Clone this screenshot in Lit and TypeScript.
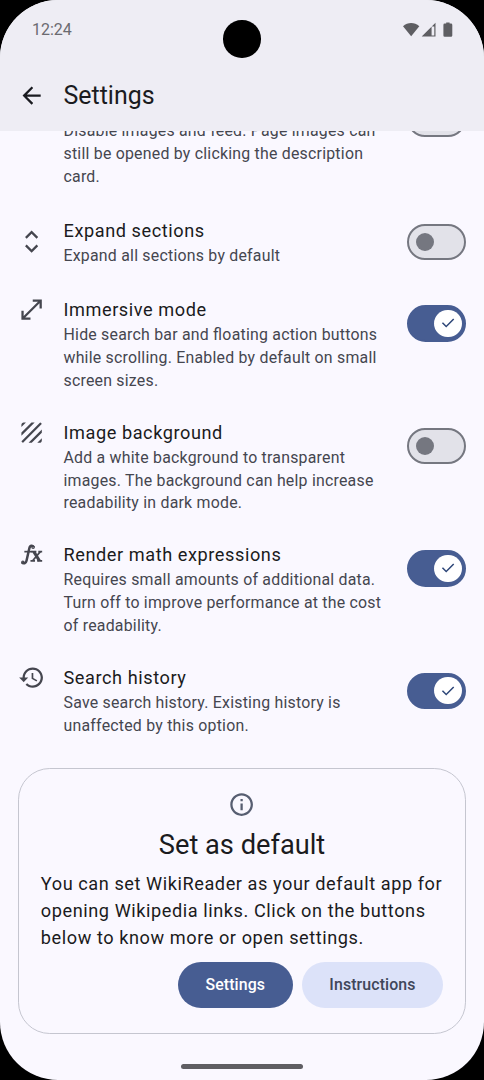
import { LitElement, html, css, svg, nothing } from "lit";
import { customElement, property } from "lit/decorators.js";

const icons: Record<string, { box: string; d: string }> = {
  back: { box: "0 -960 960 960", d: "m313-440 224 224-57 56-320-320 320-320 57 56-224 224h487v80H313Z" },
  unfold: { box: "0 0 24 24", d: "M12 2.2 6.2 8l1.45 1.45L12 5.1l4.35 4.35L17.8 8zM12 21.8l5.8-5.8-1.45-1.45L12 18.9l-4.35-4.35L6.2 16z" },
  expand: { box: "0 -960 960 960", d: "M120-120v-320h80v184l504-504H520v-80h320v320h-80v-184L256-200h184v80H120Z" },
  texture: { box: "0 0 24 24", d: "M19.51 3.08L3.08 19.51c.09.34.27.65.51.9.25.24.56.42.9.51L20.93 4.49c-.19-.69-.73-1.23-1.42-1.41zM11.88 3L3 11.88v2.83L14.71 3h-2.83zM5 3c-1.1 0-2 .9-2 2v2l4-4H5zm14 18c.55 0 1.05-.22 1.41-.59.37-.36.59-.86.59-1.41v-2l-4 4h2zm-9.71 0h2.83L21 12.12V9.29L9.29 21z" },
  history: { box: "0 0 24 24", d: "M13 3c-4.97 0-9 4.03-9 9H1l3.89 3.89.07.14L9 12H6c0-3.87 3.13-7 7-7s7 3.13 7 7-3.13 7-7 7c-1.93 0-3.68-.79-4.94-2.06l-1.42 1.42C8.27 19.99 10.51 21 13 21c4.97 0 9-4.03 9-9s-4.03-9-9-9zm-1 5v5l4.28 2.54.72-1.21-3.5-2.08V8H12z" },
  info: { box: "0 0 24 24", d: "M11 7h2v2h-2zm0 4h2v6h-2zm1-9C6.48 2 2 6.48 2 12s4.48 10 10 10 10-4.48 10-10S17.52 2 12 2zm0 18c-4.41 0-8-3.59-8-8s3.59-8 8-8 8 3.59 8 8-3.59 8-8 8z" },
  check: { box: "0 -960 960 960", d: "M382-240 154-468l57-57 171 171 367-367 57 57-424 424Z" },
};

@customElement("app-icon")
class AppIcon extends LitElement {
  @property() name = "";
  static styles = css`
    :host { display: block; width: calc(24 * var(--dp)); height: calc(24 * var(--dp)); flex: none; }
    svg { display: block; width: 100%; height: 100%; fill: currentColor; }
    .fx { fill: none; stroke: currentColor; stroke-width: 2.2; }
    .thick { stroke-width: 2.7; }
    .thin { stroke-width: 1.5; }
  `;
  render() {
    if (this.name === "function") {
      return html`<svg viewBox="0 0 24 24">
        <g class="fx">
          <path d="M13.9 5.6C13.3 3.6 10.6 3.6 10 6.4L7.5 17.4C7 19.9 4.9 20.4 3.6 18.7" />
          <circle cx="13.3" cy="5.5" r=".5" />
          <circle cx="4.3" cy="18.9" r=".5" />
          <path class="thin" d="M5.6 9.4H12.6" />
          <path class="thick" d="M13.9 9.4L18.9 17.4" />
          <path class="thin" d="M19.7 9.4L12.9 17.4" />
          <path class="thin" d="M11.9 9.4H16.2M17.9 9.4H21.3M11 17.5H15M16.9 17.5H21.3" />
        </g>
      </svg>`;
    }
    const i = icons[this.name];
    return i ? html`<svg viewBox=${i.box}>${svg`<path d=${i.d} />`}</svg>` : nothing;
  }
}

@customElement("app-switch")
class AppSwitch extends LitElement {
  @property({ type: Boolean }) on = false;
  static styles = css`
    :host { display: flex; align-items: center; flex: none; height: calc(48 * var(--dp)); }
    .track {
      box-sizing: border-box; display: flex; align-items: center;
      width: calc(52 * var(--dp)); height: calc(32 * var(--dp));
      border: calc(2 * var(--dp)) solid #757780; border-radius: 99px;
      background: #e2e2e9; padding: 0 calc(6 * var(--dp));
    }
    .thumb {
      display: flex; align-items: center; justify-content: center;
      width: calc(16 * var(--dp)); height: calc(16 * var(--dp));
      border-radius: 50%; background: #757780;
    }
    .on { background: #475d92; border-color: #475d92; justify-content: flex-end; padding: 0 calc(2 * var(--dp)); }
    .on .thumb { width: calc(24 * var(--dp)); height: calc(24 * var(--dp)); background: #fff; color: #2d4678; }
    app-icon { width: calc(16 * var(--dp)); height: calc(16 * var(--dp)); }
  `;
  render() {
    return html`<div class="track ${this.on ? "on" : ""}">
      <div class="thumb">${this.on ? html`<app-icon name="check"></app-icon>` : nothing}</div>
    </div>`;
  }
}

interface Setting { icon: string; title: string; lines: string[]; on: boolean }

const settings: Setting[] = [
  { icon: "", title: "", lines: ["Disable images and feed. Page images can", "still be opened by clicking the description", "card."], on: false },
  { icon: "unfold", title: "Expand sections", lines: ["Expand all sections by default"], on: false },
  { icon: "expand", title: "Immersive mode", lines: ["Hide search bar and floating action buttons", "while scrolling. Enabled by default on small", "screen sizes."], on: true },
  { icon: "texture", title: "Image background", lines: ["Add a white background to transparent", "images. The background can help increase", "readability in dark mode."], on: false },
  { icon: "function", title: "Render math expressions", lines: ["Requires small amounts of additional data.", "Turn off to improve performance at the cost", "of readability."], on: true },
  { icon: "history", title: "Search history", lines: ["Save search history. Existing history is", "unaffected by this option."], on: true },
];

@customElement("app-root")
class AppRoot extends LitElement {
  static styles = css`
    :host {
      --dp: 1.1344px;
      display: block; width: 484px; height: 1080px; overflow: hidden;
      background: #000; font-family: Roboto, sans-serif; color: #1a1b20;
    }
    .screen {
      position: relative; display: flex; flex-direction: column;
      height: 1080px; border-radius: 58px; overflow: hidden; background: #faf8ff;
    }
    .top { flex: none; height: 131.2px; background: #eeedf4; }
    .status {
      display: flex; justify-content: space-between; align-items: center;
      height: 59px; padding: 0 30px 0 32px; box-sizing: border-box;
      font-size: 16px; color: #6b6a70;
    }
    .status svg { display: block; fill: #5e5e62; }
    .camera {
      position: absolute; left: 223px; top: 20px; width: 37.5px; height: 37.5px;
      border-radius: 50%; background: #000;
    }
    .bar {
      display: flex; align-items: center; gap: calc(16 * var(--dp));
      height: 73px; padding-left: calc(16 * var(--dp));
      font-size: calc(22 * var(--dp));
    }
    .list { flex: 1; min-height: 0; overflow: hidden; display: flex; flex-direction: column; }
    .items { flex: none; margin-top: -52.8px; }
    .row {
      display: flex; gap: calc(16 * var(--dp)); align-items: flex-start;
      padding: calc(12 * var(--dp)) calc(16 * var(--dp)); color: #45464f;
    }
    .row.short { align-items: center; height: calc(72 * var(--dp)); padding-block: 0; }
    .text { flex: 1; white-space: nowrap; font-feature-settings: "liga" 1; }
    .title { height: calc(24 * var(--dp)); font-size: calc(16 * var(--dp)); line-height: calc(24 * var(--dp)); letter-spacing: calc(0.5 * var(--dp)); color: #1a1b20; }
    .desc {
      height: calc(20 * var(--dp)); font-size: calc(14 * var(--dp));
      line-height: calc(21.2 * var(--dp)); letter-spacing: 0.225px;
    }
    .card {
      flex: none; box-sizing: border-box; height: 266px;
      margin: 18.3px calc(16 * var(--dp)) 0; padding: 21.7px;
      border: 1px solid #c5c6d0; border-radius: calc(28 * var(--dp));
      display: flex; flex-direction: column; align-items: center;
    }
    .card app-icon { color: #575e71; }
    .card h2 { margin: 9px 0 0; font-weight: 400; font-size: calc(24 * var(--dp)); line-height: calc(32 * var(--dp)); }
    .card p {
      align-self: stretch; margin: 6.2px 0 0; white-space: nowrap;
      font-size: calc(16 * var(--dp)); line-height: 27px; letter-spacing: calc(0.5 * var(--dp));
    }
    .buttons { align-self: flex-end; display: flex; gap: calc(8 * var(--dp)); margin-top: 11.7px; }
    .btn {
      box-sizing: border-box; display: flex; align-items: center; height: calc(40 * var(--dp));
      padding: 0 27.6px 1px; border-radius: 99px;
      font-weight: 500; font-size: calc(14 * var(--dp)); letter-spacing: calc(0.1 * var(--dp));
      background: #dce2f9; color: #404659;
    }
    .primary { background: #475d92; color: #fff; }
    .nav { position: absolute; left: 181px; top: 1064px; width: 122px; height: 5px; border-radius: 3px; background: #5f5e63; }
  `;

  row(s: Setting) {
    return html`<div class="row ${s.lines.length === 1 ? "short" : ""}">
      <app-icon name=${s.icon}></app-icon>
      <div class="text">
        <div class="title">${s.title}</div>
        ${s.lines.map((l) => html`<div class="desc">${l}</div>`)}
      </div>
      <app-switch ?on=${s.on}></app-switch>
    </div>`;
  }

  render() {
    return html`<div class="screen">
      <div class="top">
        <div class="status">
          <span>12:24</span>
          <svg width="51" height="16" viewBox="0 0 51 16">
            <path d="M0 4.2C4.8-.1 11.5-.1 16.3 4.2L8.15 14.2Z" />
            <path d="M32.5 .8V14.6H18.7ZM31.3 4.6H28.6V13.4H31.3Z" fill-rule="evenodd" />
            <path d="M43.2 .4H46.6V1.6H48Q49.3 1.6 49.3 2.9V13.4Q49.3 14.7 48 14.7H41.7Q40.4 14.7 40.4 13.4V2.9Q40.4 1.6 41.7 1.6H43.2Z" />
          </svg>
        </div>
        <div class="bar"><app-icon name="back"></app-icon><span>Settings</span></div>
      </div>
      <div class="list">
        <div class="items">${settings.map((s) => this.row(s))}</div>
        <div class="card">
          <app-icon name="info"></app-icon>
          <h2>Set as default</h2>
          <p>You can set WikiReader as your default app for<br />opening Wikipedia links. Click on the buttons<br />below to know more or open settings.</p>
          <div class="buttons">
            <div class="btn primary">Settings</div>
            <div class="btn">Instructions</div>
          </div>
        </div>
      </div>
      <div class="camera"></div>
      <div class="nav"></div>
    </div>`;
  }
}
